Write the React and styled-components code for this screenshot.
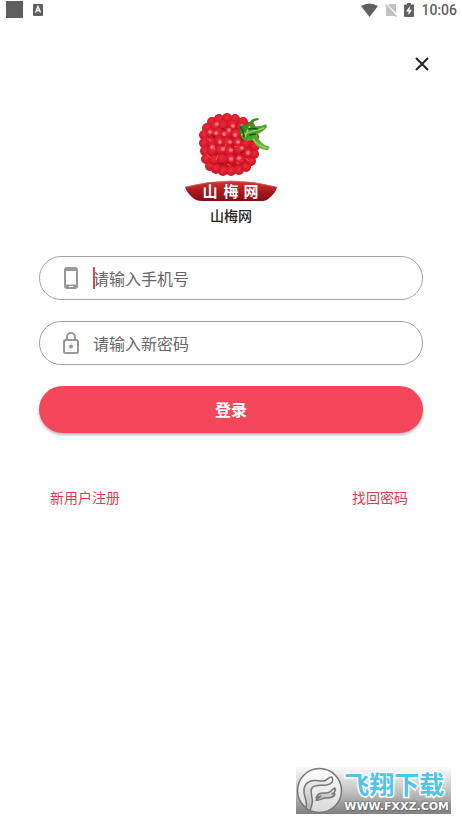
import React from "react";
import styled, { createGlobalStyle } from "styled-components";

const GlobalStyle = createGlobalStyle`
    *{
        box-sizing: border-box;
    }
    body{
        margin: 0;
        background: #fff;
        font-family: "Noto Sans CJK SC", "Noto Sans", sans-serif;
    }
`

const Page = styled.div`
    display: flex;
    flex-direction: column;
    min-height: 100vh;
`

const StatusBar = styled.header`
    display: flex;
    align-items: center;
    justify-content: space-between;
    height: 20px;
    padding: 0 5px;
    color: #616161;
`

const StatusGroup = styled.div`
    display: flex;
    align-items: center;
    gap: ${({ $gap }) => $gap}px;
`

const Clock = styled.time`
    font: 500 14px/20px Roboto, sans-serif;
`

const TopBar = styled.div`
    display: flex;
    justify-content: flex-end;
    padding: 33px 29px 0 0;
`

const CloseButton = styled.button`
    display: flex;
    padding: 4px;
    border: 0;
    background: none;
    color: #222;
`

const Brand = styled.div`
    display: flex;
    flex-direction: column;
    align-items: center;
    margin-top: 38px;
`

const BrandName = styled.h1`
    margin: 3px 0 0;
    font-size: 14px;
    font-weight: 500;
    line-height: 20px;
    color: #222;
`

const Form = styled.form`
    display: flex;
    flex-direction: column;
    gap: 21px;
    margin: 31px 39px 0;
`

const Field = styled.label`
    display: flex;
    align-items: center;
    gap: 14px;
    height: 44px;
    padding: 0 23px;
    border: 1px solid #a4a4a4;
    border-radius: 22px;
    svg{
        flex: none;
    }
`

const InputBox = styled.span`
    position: relative;
    display: flex;
    flex: 1;
`

const Input = styled.input`
    width: 100%;
    padding: 0;
    border: 0;
    outline: 0;
    background: none;
    font-family: inherit;
    font-size: 16px;
    line-height: 24px;
    color: #333;
    caret-color: #dc3c50;
    &::placeholder{
        color: #666;
        opacity: 1;
    }
`

const Cursor = styled.span`
    position: absolute;
    top: 1px;
    left: 0;
    width: 2px;
    height: 22px;
    background: #d8485c;
`

const LoginButton = styled.button`
    height: 47px;
    padding: 0 0 2px;
    border: 0;
    border-radius: 24px;
    background: #f5475b;
    box-shadow: 0 2px 3px rgba(0, 0, 0, .28);
    font-family: inherit;
    font-size: 16px;
    font-weight: 700;
    color: #fff;
`

const Links = styled.nav`
    display: flex;
    justify-content: space-between;
    margin: 54px 54px 0 50px;
`

const TextLink = styled.a`
    font-size: 14px;
    line-height: 20px;
    color: #e03c50;
    text-decoration: none;
`

const Watermark = styled.footer`
    display: flex;
    align-items: center;
    align-self: flex-end;
    gap: 1px;
    height: 47px;
    margin: auto 11px 12px 0;
    padding-right: 2px;
    background: linear-gradient(#fbfbfb, #c4c4c4 50%, #808080);
`

const WatermarkText = styled.div`
    display: flex;
    flex-direction: column;
`

const SiteName = styled.strong`
    font-size: 25px;
    font-weight: 700;
    line-height: 32px;
    color: #4fc3ea;
    -webkit-text-stroke: 3px #fff;
    paint-order: stroke fill;
`

const SiteUrl = styled.span`
    font: 700 11px/15px "DejaVu Sans", sans-serif;
    color: #fff;
    text-shadow: 0 0 2px #444, 1px 1px 0 #777;
`

// drupelet centres, outer ring first
const drupelets = [
    [28, 9], [35, 6], [43, 5], [51, 6], [59, 9], [66, 14],
    [23, 15], [20, 22], [20, 30], [21, 38], [22, 46], [26, 53],
    [32, 56], [39, 58], [47, 58], [55, 57], [62, 54], [67, 48],
    [70, 41], [71, 33], [70, 24], [31, 13], [39, 12], [48, 12],
    [57, 14], [27, 20], [34, 20], [43, 20], [52, 21], [62, 22],
    [27, 29], [35, 28], [43, 29], [53, 29], [62, 31], [28, 38],
    [36, 37], [45, 38], [55, 37], [64, 40], [30, 47], [38, 46],
    [47, 46], [56, 47],
]

const highlights = [
    [26, 19], [32, 20], [40, 21], [36, 29], [45, 17], [51, 22],
    [46, 29], [54, 29], [49, 13], [58, 13], [58, 35], [47, 37],
    [39, 36], [64, 40], [28, 34], [55, 45], [47, 46], [33, 11],
]

const Raspberry = () =>
    <svg width="94" height="89" viewBox="0 0 94 89" role="img" aria-label="山梅网">
        <defs>
            <radialGradient id="drupe" cx=".5" cy=".4" r=".6">
                <stop offset="0" stopColor="#e6303f" />
                <stop offset=".6" stopColor="#dc1c2c" />
                <stop offset="1" stopColor="#c51020" />
            </radialGradient>
            <radialGradient id="shine">
                <stop offset="0" stopColor="#ff9cae" />
                <stop offset=".5" stopColor="#f46c80" stopOpacity=".8" />
                <stop offset="1" stopColor="#e83a4a" stopOpacity="0" />
            </radialGradient>
            <linearGradient id="leaf" x1="0" y1="0" x2="1" y2="1">
                <stop offset="0" stopColor="#1f6d1c" />
                <stop offset=".5" stopColor="#4ba52a" />
                <stop offset="1" stopColor="#7bbf42" />
            </linearGradient>
            <linearGradient id="ribbon" x1="0" y1="0" x2="0" y2="1">
                <stop offset="0" stopColor="#d0353a" />
                <stop offset=".5" stopColor="#ae191f" />
                <stop offset="1" stopColor="#7d0f14" />
            </linearGradient>
        </defs>
        <ellipse cx="45" cy="32" rx="26" ry="27" fill="#c41022" />
        {drupelets.map(([x, y]) => <circle key={`${x}-${y}`} cx={x} cy={y} r="5" fill="url(#drupe)" />)}
        <path d="M23 25L27 28M30 32L31 37M42 31L40 36M22 41L27 45M34 42L32 47M43 51L47 53M52 49L55 51M61 45L65 48M50 34L54 33" fill="none" stroke="#ef8b4b" strokeWidth="1" opacity=".65" />
        <path d="M38 15L42 18M27 22L31 24M56 40L60 38M36 50L40 51M59 26L65 27" fill="none" stroke="#930716" strokeWidth="1" />
        {highlights.map(([x, y]) => <circle key={`${x}-${y}`} cx={x} cy={y} r="3" fill="url(#shine)" />)}
        <path d="M55 13Q60 12 65 11Q66 6 74 5L75 7Q69 7 69 12Q75 15 82 11L83 14Q78 20 73 21Q75 31 86 34L84 37Q74 38 69 27Q61 30 57 24Q56 19 55 13Z" fill="url(#leaf)" />
        <path d="M57 22Q66 19 80 15M66 13Q63 18 61 24M69 26Q73 32 82 35" fill="none" stroke="#99cc58" strokeWidth="1.5" />
        <path d="M56 14Q60 18 60 24M64 16Q69 15 74 16M65 22L72 21" fill="none" stroke="#175b18" strokeWidth="1.5" />
        <path d="M1 74Q23 68 47 68Q70 68 93 74Q92 80 84 86Q82 88 77 88H18Q12 88 9 85Q3 80 1 74Z" fill="url(#ribbon)" />
        <path d="M2 74Q24 68 47 68T92 74" fill="none" stroke="#d9686b" strokeWidth=".7" />
        <g fill="#fff" fontFamily="Noto Sans CJK SC, sans-serif" fontSize="15" fontWeight="700" textAnchor="middle">
            <text x="26" y="84">山</text>
            <text x="47" y="84">梅</text>
            <text x="67" y="84">网</text>
        </g>
    </svg>

const PhoneIcon = () =>
    <svg width="16" height="22" viewBox="0 0 16 22">
        <rect x="2" y="1" width="12" height="20" rx="2" fill="none" stroke="#999" strokeWidth="2" />
        <path d="M2 2.5H14M2 19H14" stroke="#999" strokeWidth="3" />
        <path d="M6 19.5H10" stroke="#fff" strokeWidth="1" />
    </svg>

const LockIcon = () =>
    <svg width="16" height="22" viewBox="0 0 16 22">
        <rect x="1" y="8" width="14" height="13" rx="1.5" fill="none" stroke="#999" strokeWidth="2" />
        <path d="M4 8V5a4 4 0 0 1 8 0V8" fill="none" stroke="#999" strokeWidth="2" />
        <circle cx="8" cy="14.5" r="2" fill="#999" />
    </svg>

const CloseIcon = () =>
    <svg width="14" height="14" viewBox="0 0 14 14">
        <path d="M1 1L13 13M13 1L1 13" fill="none" stroke="currentColor" strokeWidth="2" />
    </svg>

const NoticeIcons = () =>
    <StatusGroup $gap={10}>
        <svg width="18" height="18" viewBox="0 0 18 18">
            <rect x="1" width="17" height="17" fill="#5f5f5f" />
        </svg>
        <svg width="10" height="12" viewBox="0 0 10 12">
            <rect width="10" height="12" rx="1" fill="#5f5f5f" />
            <path d="M2.5 8.5L5 2.5L7.5 8.5M3.5 6.5H6.5" fill="none" stroke="#fff" strokeWidth="1.4" />
        </svg>
    </StatusGroup>

const SystemIcons = () =>
    <StatusGroup $gap={7}>
        <svg width="17" height="14" viewBox="0 0 17 14">
            <path d="M0 3Q8.5-2 17 3L8.5 14Z" fill="currentColor" />
        </svg>
        <svg width="12" height="14" viewBox="0 0 12 14">
            <path d="M4.5 1H11V10L3 2ZM0 2L1 1L12 13L11 14L10 13H1V4Z" fill="#c2c2c2" />
        </svg>
        <svg width="10" height="14" viewBox="0 0 10 14">
            <path d="M3 0H7V1.5H9Q10 1.5 10 2.5V13Q10 14 9 14H1Q0 14 0 13V2.5Q0 1.5 1 1.5H3Z" fill="currentColor" />
            <path d="M6 3L2 8.5H4.5V12L8 6.8H5.5Z" fill="#fff" />
        </svg>
        <Clock>10:06</Clock>
    </StatusGroup>

const Emblem = () =>
    <svg width="47" height="47" viewBox="0 0 47 47">
        <defs>
            <linearGradient id="disc" x1="0" y1="0" x2="0" y2="1">
                <stop offset="0" stopColor="#fff" />
                <stop offset="1" stopColor="#d8d8d8" />
            </linearGradient>
            <linearGradient id="wing" x1="0" y1="0" x2="0" y2="1">
                <stop offset="0" stopColor="#f4f4f4" />
                <stop offset="1" stopColor="#b4b4b4" />
            </linearGradient>
        </defs>
        <circle cx="23.5" cy="23.5" r="22" fill="url(#disc)" stroke="#777" strokeWidth="1.5" />
        <g fill="url(#wing)" stroke="#777" strokeWidth="1.5" strokeLinejoin="round">
            <path d="M10 41C12 34 7 29 8 22C10 13 17 13 25 14C31 15 31 10 36 10C38 14 36 17 31 18C25 19 19 17 16 21C13 26 18 31 16 37L14 44Z" />
            <path d="M20 31C22 25 26 26 31 26C35 26 36 22 39 21C40 24 38 26 36 27L39 27C38 31 33 31 30 31C26 31 24 34 20 33L25 29Z" />
        </g>
    </svg>

const TextField = ({ icon, active, ...rest }) =>
    <Field>
        {icon}
        <InputBox>
            <Input aria-label={rest.placeholder} {...rest} />
            {active && <Cursor />}
        </InputBox>
    </Field>

const App = () =>
    <Page>
        <GlobalStyle />
        <StatusBar>
            <NoticeIcons />
            <SystemIcons />
        </StatusBar>
        <TopBar>
            <CloseButton type="button" aria-label="关闭">
                <CloseIcon />
            </CloseButton>
        </TopBar>
        <main>
            <Brand>
                <Raspberry />
                <BrandName>山梅网</BrandName>
            </Brand>
            <Form onSubmit={e => e.preventDefault()}>
                <TextField icon={<PhoneIcon />} type="tel" placeholder="请输入手机号" active />
                <TextField icon={<LockIcon />} type="password" placeholder="请输入新密码" />
                <LoginButton type="submit">登录</LoginButton>
            </Form>
            <Links>
                <TextLink href="#register">新用户注册</TextLink>
                <TextLink href="#recover">找回密码</TextLink>
            </Links>
        </main>
        <Watermark>
            <Emblem />
            <WatermarkText>
                <SiteName>飞翔下载</SiteName>
                <SiteUrl>WWW.FXXZ.COM</SiteUrl>
            </WatermarkText>
        </Watermark>
    </Page>

export default App
